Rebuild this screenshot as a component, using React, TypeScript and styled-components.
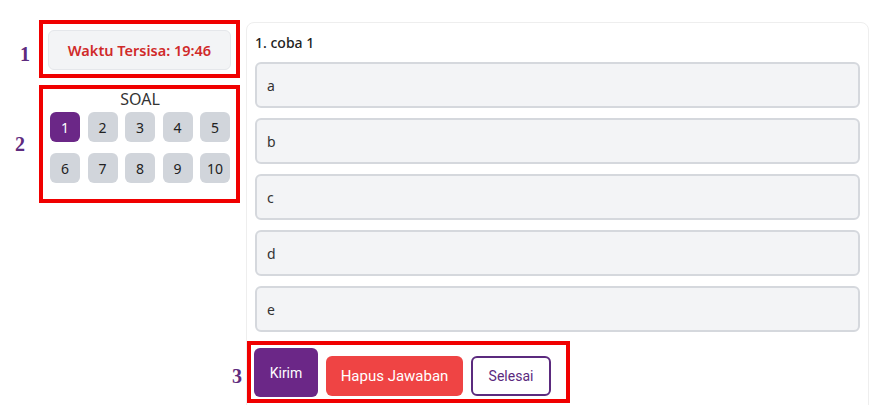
import React from "react";
import styled, { createGlobalStyle } from "styled-components";

const Global = createGlobalStyle`
  html, body { margin: 0; padding: 0; background: #ffffff; }
  body { font-family: "Noto Sans", "Open Sans", sans-serif; overflow: hidden; }
  * { box-sizing: border-box; }
`;

const Page = styled.div`
  display: flex;
  align-items: flex-start;
  gap: 6px;
  padding: 20px 0 0 39px;
  height: 405px;
  overflow: hidden;
`;

const LeftCol = styled.div`
  display: flex;
  flex-direction: column;
  gap: 7px;
  width: 201px;
`;

const Marked = styled.div<{ $pad: string }>`
  position: relative;
  border: 4px solid #f00000;
  padding: ${(p) => p.$pad};
`;

const Tag = styled.span<{ $left: number; $top: number }>`
  position: absolute;
  left: ${(p) => p.$left}px;
  top: ${(p) => p.$top}px;
  font-family: "Liberation Serif", "DejaVu Serif", serif;
  font-weight: bold;
  font-size: 20px;
  line-height: 20px;
  color: #5e2b7e;
`;

const TimerBox = styled.div`
  height: 40px;
  display: flex;
  align-items: center;
  justify-content: center;
  background: #f3f4f6;
  border: 1px solid #e5e7eb;
  border-radius: 6px;
  color: #d02a2a;
  font-size: 14.5px;
  font-weight: 600;
`;

const SoalTitle = styled.div`
  text-align: center;
  font-size: 16px;
  line-height: 18px;
  color: #333333;
  font-weight: 400;
`;

const Grid = styled.div`
  display: grid;
  grid-template-columns: repeat(5, 30px);
  column-gap: 7.5px;
  row-gap: 11px;
  margin-top: 4px;
`;

const NumBtn = styled.div<{ $active?: boolean }>`
  width: 30px;
  height: 30px;
  border-radius: 6px;
  display: flex;
  align-items: center;
  justify-content: center;
  font-size: 14px;
  background: ${(p) => (p.$active ? "#6b2787" : "#d1d5db")};
  color: ${(p) => (p.$active ? "#ffffff" : "#222222")};
`;

const Card = styled.div`
  margin-top: 2px;
  width: 623px;
  height: 420px;
  border: 1px solid #eeeeee;
  border-radius: 8px;
  padding: 10px 8px 0 8px;
  display: flex;
  flex-direction: column;
`;

const Question = styled.div`
  font-size: 14px;
  line-height: 20px;
  font-weight: 500;
  color: #222222;
  margin-bottom: 9px;
`;

const Options = styled.div`
  display: flex;
  flex-direction: column;
  gap: 10px;
`;

const Option = styled.div`
  height: 46px;
  background: #f3f4f6;
  border: 2px solid #d5d8dd;
  border-radius: 6px;
  display: flex;
  align-items: center;
  padding-left: 10px;
  font-size: 14px;
  color: #333333;
`;

const ActionBox = styled(Marked)`
  margin: 9px 0 0 -8px;
  width: 323px;
  height: 62px;
  display: flex;
  align-items: flex-start;
  gap: 8px;
`;

const ActionBtn = styled.div<{ $kind: "primary" | "danger" | "outline"; $top: number; $w: number; $h: number }>`
  margin-top: ${(p) => p.$top}px;
  width: ${(p) => p.$w}px;
  height: ${(p) => p.$h}px;
  border-radius: 6px;
  display: flex;
  align-items: center;
  justify-content: center;
  font-family: Roboto, "Liberation Sans", sans-serif;
  font-size: ${(p) => (p.$kind === "danger" ? 15 : 14)}px;
  background: ${(p) => (p.$kind === "primary" ? "#6b2787" : p.$kind === "danger" ? "#ef4444" : "#ffffff")};
  color: ${(p) => (p.$kind === "outline" ? "#5b2a7e" : "#ffffff")};
  border: ${(p) => (p.$kind === "outline" ? "2px solid #5b2a7e" : "none")};
`;

export default function App() {
  const nums = Array.from({ length: 10 }, (_, i) => i + 1);
  return (
    <>
      <Global />
      <Page>
        <LeftCol>
          <Marked $pad="6px 5px 4px 5px">
            <Tag $left={-23} $top={20}>1</Tag>
            <TimerBox>Waktu Tersisa: 19:46</TimerBox>
          </Marked>
          <Marked $pad="1px 6px 16px 7px">
            <Tag $left={-28} $top={45}>2</Tag>
            <SoalTitle>SOAL</SoalTitle>
            <Grid>
              {nums.map((n) => (
                <NumBtn key={n} $active={n === 1}>{n}</NumBtn>
              ))}
            </Grid>
          </Marked>
        </LeftCol>
        <Card>
          <Question>1. coba 1</Question>
          <Options>
            {["a", "b", "c", "d", "e"].map((o) => (
              <Option key={o}>{o}</Option>
            ))}
          </Options>
          <ActionBox $pad="0 0 0 3px">
            <Tag $left={-19} $top={21}>3</Tag>
            <ActionBtn $kind="primary" $top={3} $w={64} $h={49}>Kirim</ActionBtn>
            <ActionBtn $kind="danger" $top={11} $w={137} $h={40}>Hapus Jawaban</ActionBtn>
            <ActionBtn $kind="outline" $top={11} $w={80} $h={40}>Selesai</ActionBtn>
          </ActionBox>
        </Card>
      </Page>
    </>
  );
}
